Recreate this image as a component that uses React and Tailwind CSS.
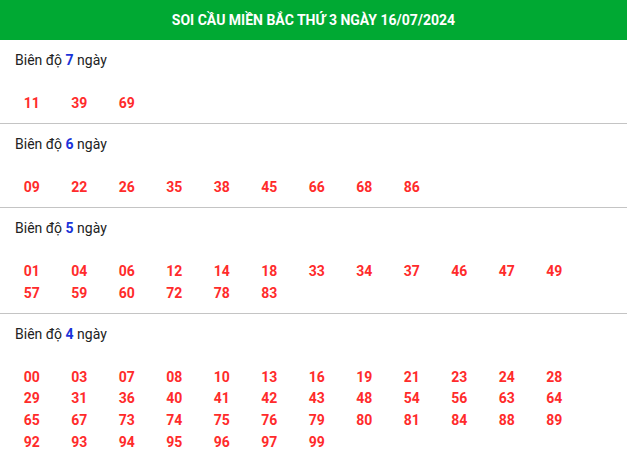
import React from "react";

const sections = [
  { n: 7, nums: ["11", "39", "69"] },
  { n: 6, nums: ["09", "22", "26", "35", "38", "45", "66", "68", "86"] },
  {
    n: 5,
    nums: ["01", "04", "06", "12", "14", "18", "33", "34", "37", "46", "47", "49", "57", "59", "60", "72", "78", "83"],
  },
  {
    n: 4,
    nums: [
      "00", "03", "07", "08", "10", "13", "16", "19", "21", "23", "24", "28",
      "29", "31", "36", "40", "41", "42", "43", "48", "54", "56", "63", "64",
      "65", "67", "73", "74", "75", "76", "79", "80", "81", "84", "88", "89",
      "92", "93", "94", "95", "96", "97", "99",
    ],
  },
];

export default function App() {
  return (
    <div className="w-[627px] h-[460px] overflow-hidden bg-white font-['Roboto',sans-serif]">
      <div className="h-10 bg-[#00a933] flex items-center justify-center text-white font-bold text-[14px]">
        SOI CẦU MIỀN BẮC THỨ 3 NGÀY 16/07/2024
      </div>
      {sections.map((s, i) => (
        <div key={s.n} className={i < sections.length - 1 ? "border-b border-[#c4c4c4]" : ""}>
          <div className="pl-[15px] pt-[10px] h-[42px] leading-[20px] text-[14px] text-[#222]">
            Biên độ <span className="font-bold text-[#1a33d9]">{s.n}</span> ngày
          </div>
          <div className="pl-2 pt-[10.5px] pb-[9px] flex flex-wrap w-[594px]">
            {s.nums.map((x) => (
              <div key={x} className="w-[47.5px] h-[21.7px] leading-[21.7px] text-center text-[14px] font-bold text-[#ff2b2b]">
                {x}
              </div>
            ))}
          </div>
        </div>
      ))}
    </div>
  );
}
